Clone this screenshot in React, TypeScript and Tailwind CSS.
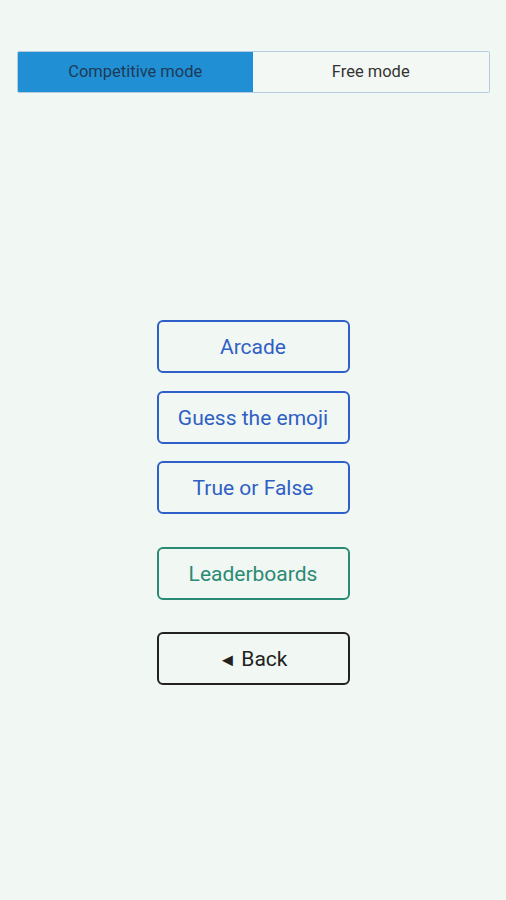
import React, { useState } from "react";

const modes = ["Competitive mode", "Free mode"];

const games = ["Arcade", "Guess the emoji", "True or False"];

export default function App() {
  const [mode, setMode] = useState(0);

  return (
    <div
      className="min-h-[900px] w-full bg-[#f1f7f3] flex flex-col items-center"
      style={{ fontFamily: "Roboto, 'Noto Sans', sans-serif" }}
    >
      <div className="mt-[51px] flex h-[42px] w-[473px] rounded-[2px] border border-[#b6cbe0] overflow-hidden">
        {modes.map((m, i) => (
          <button
            key={m}
            onClick={() => setMode(i)}
            className={
              i === mode
                ? "flex-1 bg-[#218fd4] pt-[1px] text-[16.5px] text-[#1d3b57]"
                : "flex-1 bg-[#f3f8f5] pt-[1px] text-[16.5px] text-[#333333]"
            }
          >
            {m}
          </button>
        ))}
      </div>

      <div className="mt-[227px] flex flex-col items-center">
        <div className="flex flex-col gap-[17.5px]">
          {games.map((g) => (
            <button
              key={g}
              className="h-[53px] w-[193px] rounded-[6px] border-2 border-[#2f5fc8] pt-[3px] text-[21px] text-[#2f5fc4]"
            >
              {g}
            </button>
          ))}
        </div>

        <button className="mt-[33px] h-[53px] w-[193px] rounded-[6px] border-2 border-[#2a8a74] pt-[3px] text-[21px] text-[#2a8a74]">
          Leaderboards
        </button>

        <button className="mt-[32px] flex h-[53px] w-[193px] items-center justify-center gap-[5px] rounded-[6px] border-2 border-[#222222] pt-[3px] text-[21px] text-[#222222]">
          <span className="text-[18px] leading-none">◄</span>
          <span>Back</span>
        </button>
      </div>
    </div>
  );
}
